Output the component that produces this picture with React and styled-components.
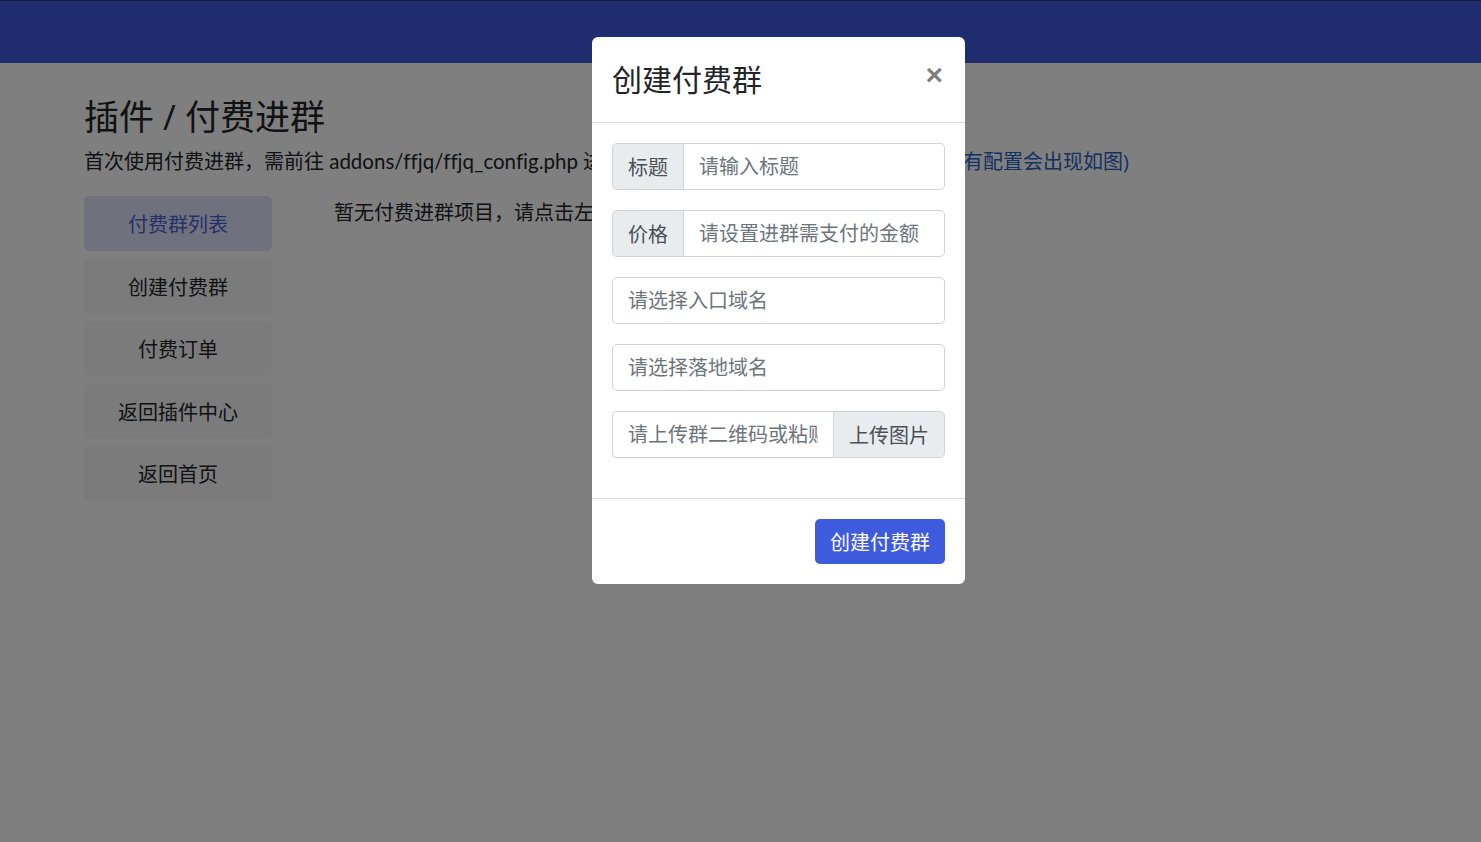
import React from 'react'
import styled, { createGlobalStyle } from 'styled-components'

const GlobalStyle = createGlobalStyle`
  html, body {
    margin: 0;
    padding: 0;
    background: #fff;
    font-family: "Open Sans", "Noto Sans CJK SC", sans-serif;
    font-size: 20px;
    color: #212529;
  }
  * { box-sizing: border-box; }
`

const Page = styled.div`
  min-height: 842px;
  border-top: 1px solid #2a3a8a;
`

const TopBar = styled.header`
  height: 62px;
  background: #3e5bdd;
`

const Container = styled.main`
  padding: 33px 84px 0;
`

const Title = styled.h3`
  margin: 0;
  font-size: 35px;
  font-weight: 400;
  line-height: 42px;
`

const Lead = styled.p`
  margin: 9px 0 0;
  height: 30px;
  font-size: 20px;
  line-height: 30px;
  white-space: nowrap;
  code {
    font-family: "Lato", "Open Sans", sans-serif;
    font-size: 20.5px;
    line-height: 1;
    font-variant-ligatures: none;
  }
  a {
    color: #2a62c4;
    text-decoration: none;
  }
`

const Layout = styled.div`
  display: flex;
  gap: 62px;
  margin-top: 19px;
`

const SideNav = styled.nav`
  width: 188px;
  display: flex;
  flex-direction: column;
  gap: 7.5px;
`

const NavItem = styled.a`
  height: 55px;
  display: flex;
  align-items: center;
  justify-content: center;
  border-radius: 5px;
  font-size: 20px;
  background: ${p => (p.$active ? '#dee4fb' : '#f6f6f8')};
  color: ${p => (p.$active ? '#4a63d0' : '#212529')};
`

const Content = styled.div`
  padding-top: 2px;
  font-size: 20px;
  line-height: 30px;
`

const Backdrop = styled.div`
  position: fixed;
  inset: 0;
  background: rgba(0, 0, 0, 0.5);
`

const Dialog = styled.div`
  position: fixed;
  top: 37px;
  left: 592px;
  width: 373px;
  background: #fff;
  border-radius: 6px;
  display: flex;
  flex-direction: column;
`

const DialogHeader = styled.div`
  display: flex;
  align-items: flex-start;
  justify-content: space-between;
  padding: 20px;
  border-bottom: 1px solid #dee2e6;
`

const DialogTitle = styled.h4`
  margin: 0;
  font-size: 30px;
  font-weight: 400;
  line-height: 45px;
`

const Close = styled.button`
  border: 0;
  background: transparent;
  padding: 0 2px 0 20px;
  margin-top: -5px;
  font-size: 30px;
  font-weight: 700;
  line-height: 45px;
  color: #000;
  opacity: 0.5;
  font-family: "Liberation Sans", sans-serif;
`

const DialogBody = styled.div`
  padding: 20px 20px 0;
`

const InputGroup = styled.div`
  display: flex;
  margin-bottom: 20px;
  height: 47px;
  &:last-child { margin-bottom: 40px; }
`

const Addon = styled.span`
  display: flex;
  align-items: center;
  padding: 0 15px;
  background: #e9ecef;
  border: 1px solid #ced4da;
  color: #495057;
  font-size: 20px;
  white-space: nowrap;
  border-radius: ${p => (p.$right ? '0 5px 5px 0' : '5px 0 0 5px')};
`

const Input = styled.input`
  flex: 1;
  min-width: 0;
  height: 47px;
  padding: 0 15px;
  border: 1px solid #ced4da;
  font-size: 20px;
  font-family: inherit;
  color: #495057;
  border-radius: ${p => (p.$join === 'left' ? '0 5px 5px 0' : p.$join === 'right' ? '5px 0 0 5px' : '5px')};
  ${p => (p.$join === 'left' ? 'border-left: 0;' : p.$join === 'right' ? 'border-right: 0;' : '')}
  &::placeholder { color: #6c757d; }
`

const DialogFooter = styled.div`
  display: flex;
  justify-content: flex-end;
  padding: 20px;
  border-top: 1px solid #dee2e6;
`

const PrimaryButton = styled.button`
  height: 45px;
  padding: 0 15px;
  border: 0;
  border-radius: 5px;
  background: #3e5bdd;
  color: #fff;
  font-size: 20px;
  font-family: inherit;
`

export default function App() {
  const nav = ['付费群列表', '创建付费群', '付费订单', '返回插件中心', '返回首页']
  return (
    <>
      <GlobalStyle />
      <Page>
        <TopBar />
        <Container>
          <Title>插件 / 付费进群</Title>
          <Lead>
            首次使用付费进群，需前往 <code>addons/ffjq/ffjq_config.php</code> 进行配置
            <a href="#">（点击查看详细配置说明，若是没有配置会出现如图)</a>
          </Lead>
          <Layout>
            <SideNav>
              {nav.map((n, i) => (
                <NavItem key={n} $active={i === 0}>{n}</NavItem>
              ))}
            </SideNav>
            <Content>暂无付费进群项目，请点击左侧创建付费群</Content>
          </Layout>
        </Container>
      </Page>
      <Backdrop />
      <Dialog>
        <DialogHeader>
          <DialogTitle>创建付费群</DialogTitle>
          <Close>×</Close>
        </DialogHeader>
        <DialogBody>
          <InputGroup>
            <Addon>标题</Addon>
            <Input $join="left" placeholder="请输入标题" />
          </InputGroup>
          <InputGroup>
            <Addon>价格</Addon>
            <Input $join="left" placeholder="请设置进群需支付的金额" />
          </InputGroup>
          <InputGroup>
            <Input placeholder="请选择入口域名" />
          </InputGroup>
          <InputGroup>
            <Input placeholder="请选择落地域名" />
          </InputGroup>
          <InputGroup>
            <Input $join="right" placeholder="请上传群二维码或粘贴链接" />
            <Addon $right>上传图片</Addon>
          </InputGroup>
        </DialogBody>
        <DialogFooter>
          <PrimaryButton>创建付费群</PrimaryButton>
        </DialogFooter>
      </Dialog>
    </>
  )
}
